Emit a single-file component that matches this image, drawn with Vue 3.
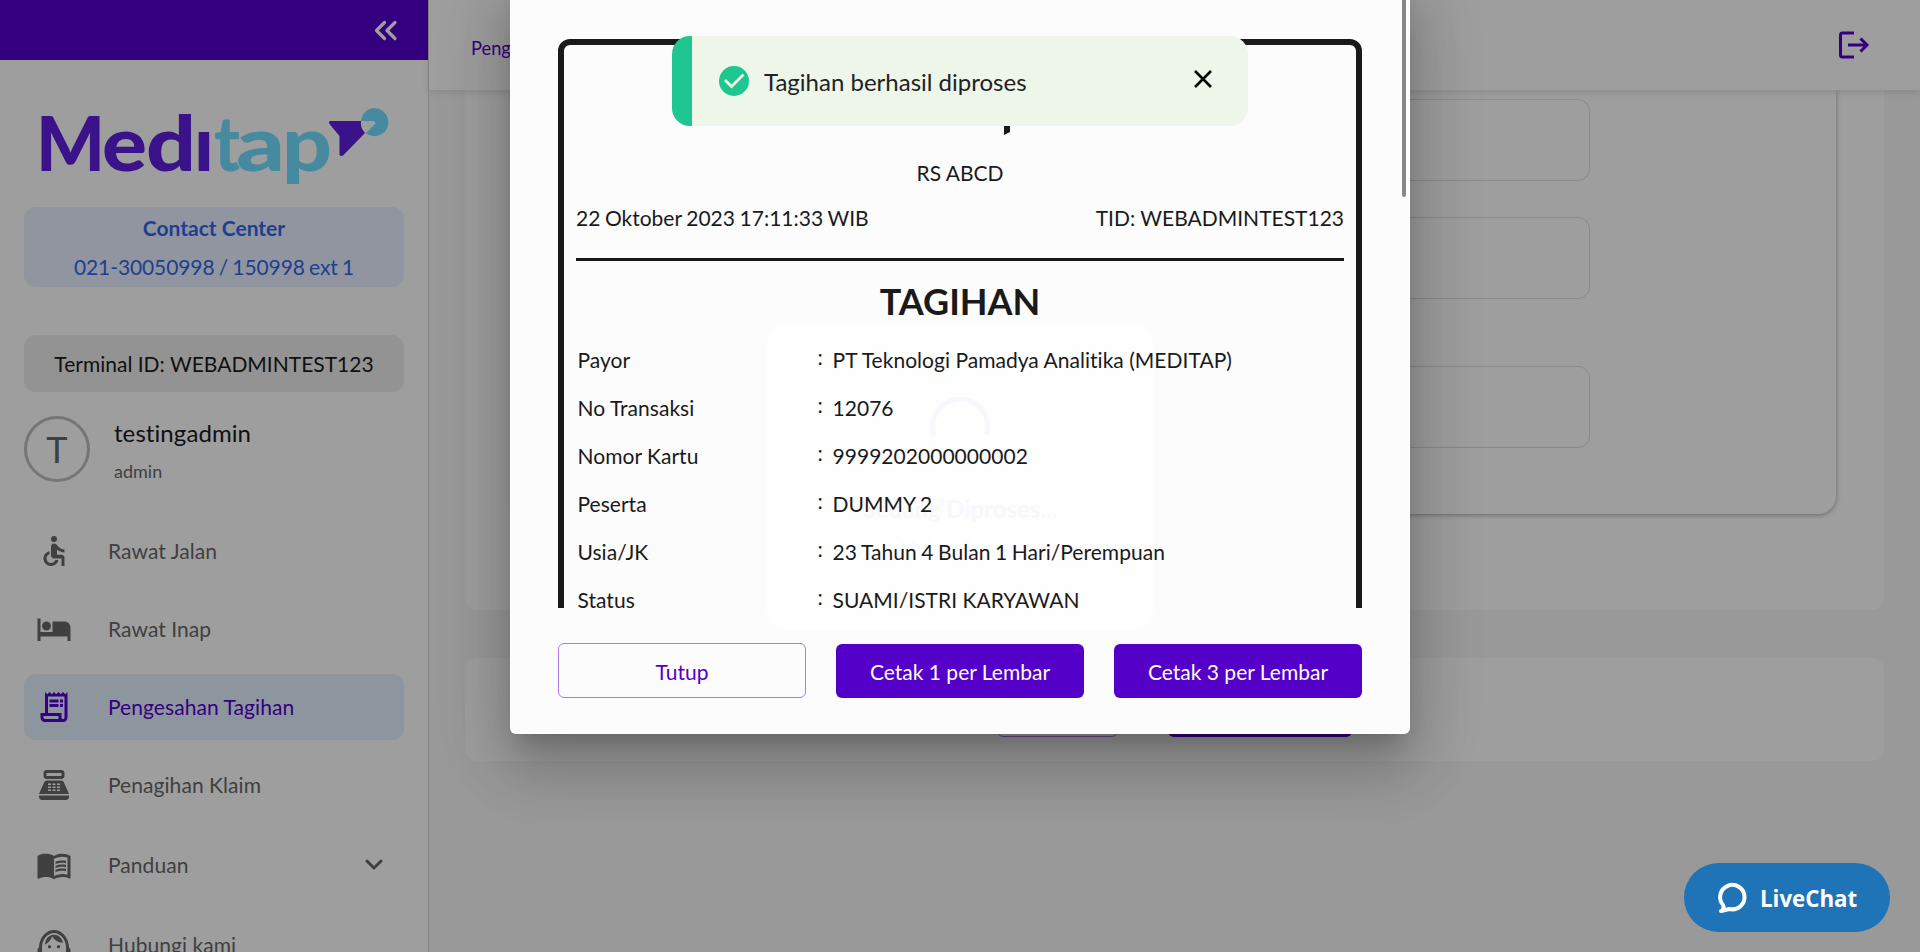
<script setup>
const menu = [
  { label: 'Rawat Jalan', icon: 'M12 2a2 2 0 1 0 0 4 2 2 0 0 0 0-4zM19 13v-2c-1.54.02-3.09-.75-4.07-1.83l-1.29-1.43c-.17-.19-.38-.34-.61-.45H13c-.35-.2-.75-.3-1.19-.26C10.76 7.11 10 8.04 10 9.09V15c0 1.1.9 2 2 2h5v5h2v-5.5c0-1.1-.9-2-2-2h-3v-3.45c1.29 1.07 3.25 1.94 5 1.95zm-6.17 5c-.41 1.16-1.52 2-2.83 2-1.66 0-3-1.34-3-3 0-1.31.84-2.41 2-2.83V12.1c-2.28.46-4 2.48-4 4.9 0 2.76 2.24 5 5 5 2.42 0 4.44-1.72 4.9-4h-2.07z' },
  { label: 'Rawat Inap', icon: 'M7 13c1.66 0 3-1.34 3-3S8.66 7 7 7s-3 1.34-3 3 1.34 3 3 3zm12-6h-8v7H3V5H1v15h2v-3h18v3h2v-9c0-2.21-1.79-4-4-4z' },
  { label: 'Pengesahan Tagihan', active: true, icon: 'M19.5 3.5 18 2l-1.5 1.5L15 2l-1.5 1.5L12 2l-1.5 1.5L9 2 7.5 3.5 6 2v14H3v3c0 1.66 1.34 3 3 3h12c1.66 0 3-1.34 3-3V2l-1.5 1.5zM15 20H6c-.55 0-1-.45-1-1v-1h10v2zm4-1c0 .55-.45 1-1 1s-1-.45-1-1v-3H8V5h11v14zM9 7h6v2H9zM16 7h2v2h-2zM9 10h6v2H9zM16 10h2v2h-2z' },
  { label: 'Penagihan Klaim', icon: 'M17 2H7c-1.1 0-2 .9-2 2v2c0 1.1.9 2 2 2h10c1.1 0 2-.9 2-2V4c0-1.1-.9-2-2-2zm0 4H7V4h10v2zm3 16H4c-1.1 0-2-.9-2-2v-1h20v1c0 1.1-.9 2-2 2zM18.53 10.19C18.21 9.47 17.49 9 16.7 9H7.3c-.79 0-1.51.47-1.83 1.19L2 18h20l-3.47-7.81zM8 11h2v1H8zM11 11h2v1h-2zM14 11h2v1h-2zM8 13h2v1H8zM11 13h2v1h-2zM14 13h2v1h-2zM8 15h2v1H8zM11 15h2v1h-2zM14 15h2v1h-2z' },
  { label: 'Panduan', expandable: true, icon: 'M21 5c-1.11-.35-2.33-.5-3.5-.5-1.95 0-4.05.4-5.5 1.5-1.45-1.1-3.55-1.5-5.5-1.5S2.45 4.9 1 6v14.65c0 .25.25.5.5.5.1 0 .15-.05.25-.05C3.1 20.45 5.05 20 6.5 20c1.95 0 4.05.4 5.5 1.5 1.35-.85 3.8-1.5 5.5-1.5 1.65 0 3.35.3 4.75 1.05.1.05.15.05.25.05.25 0 .5-.25.5-.5V6c-.6-.45-1.25-.75-2-1zm0 13.5c-1.1-.35-2.3-.5-3.5-.5-1.7 0-4.15.65-5.5 1.5V8c1.35-.85 3.8-1.5 5.5-1.5 1.2 0 2.4.15 3.5.5v11.5zM17.5 10.5c.88 0 1.73.09 2.5.26V9.24c-.79-.15-1.64-.24-2.5-.24-1.7 0-3.24.29-4.5.83v1.66c1.13-.64 2.7-.99 4.5-.99zM13 12.49v1.66c1.13-.64 2.7-.99 4.5-.99.88 0 1.73.09 2.5.26V11.9c-.79-.15-1.64-.24-2.5-.24-1.7 0-3.24.3-4.5.83zM17.5 14.33c-1.7 0-3.24.29-4.5.83v1.66c1.13-.64 2.7-.99 4.5-.99.88 0 1.73.09 2.5.26v-1.52c-.79-.16-1.64-.24-2.5-.24z' },
  { label: 'Hubungi kami', icon: 'M22 13.7C22 7.1 17.2 2 12 2S2 7.1 2 13.7c-.6.34-1 .98-1 1.8v2c0 1.1.9 2 2 2h1v-6.1C4 8.5 7.6 4 12 4s8 4.5 8 9.4V19.500h1c1.1 0 2-.9 2-2v-2c0-.82-.4-1.46-1-1.8zM9 12a1.1 1.1 0 1 0 0 2.2A1.1 1.1 0 0 0 9 12zM15 12a1.1 1.1 0 1 0 0 2.2A1.1 1.1 0 0 0 15 12zM6 11.6C7.800 10.9 9.900 9 10.800 6.200 12.200 8.800 14.900 10.500 18 10.500 17.400 7.400 14.900 5.100 12 5.100 8.700 5.100 6.100 8 6 11.600z' },
]
const rows = [
  ['Payor', 'PT Teknologi Pamadya Analitika (MEDITAP)'],
  ['No Transaksi', '12076'],
  ['Nomor Kartu', '9999202000000002'],
  ['Peserta', 'DUMMY 2', true],
  ['Usia/JK', '23 Tahun 4 Bulan 1 Hari/Perempuan', true],
  ['Status', 'SUAMI/ISTRI KARYAWAN'],
]
</script>

<template>
  <div class="app">
    <aside class="sidebar">
      <div class="side-top">
        <svg width="36" height="36" viewBox="0 0 36 36" fill="none" stroke="#9e9e9e" stroke-width="3.2" stroke-linecap="round" stroke-linejoin="round"><path d="M16.500 10.500 8.500 18.500l8 8M27 10.500 19 18.500l8 8" /></svg>
      </div>
      <svg class="logo" width="350" height="82" viewBox="0 0 350 82">
        <g class="word purple">
          <text x="-3" y="64" textLength="69" lengthAdjust="spacingAndGlyphs">M</text>
          <text x="63" y="64" textLength="45" lengthAdjust="spacingAndGlyphs">e</text>
          <text x="107" y="64" textLength="50" lengthAdjust="spacingAndGlyphs">d</text>
          <text x="155" y="64">ı</text>
        </g>
        <g class="word teal">
          <text x="175" y="64" textLength="26" lengthAdjust="spacingAndGlyphs">t</text>
          <text x="197" y="64" textLength="49" lengthAdjust="spacingAndGlyphs">a</text>
          <text x="243" y="64" textLength="50" lengthAdjust="spacingAndGlyphs">p</text>
        </g>
        <path d="M291 14h31q-1 7 4 12l-21.500 22q-2 2-4 0V29l-10-12q-1-3 .5-3z" fill="#3a1289" />
        <path d="M322 14a13.700 14 0 1 1 5 12l9-9q1-3-2-3z" fill="#468a9f" />
      </svg>
      <div class="contact">
        <strong>Contact Center</strong>
        <span>021-30050998 / 150998 ext 1</span>
      </div>
      <div class="terminal">Terminal ID: WEBADMINTEST123</div>
      <div class="user">
        <div class="avatar">T</div>
        <div class="who">
          <div class="name">testingadmin</div>
          <div class="role">admin</div>
        </div>
      </div>
      <nav class="menu">
        <div v-for="m in menu" :key="m.label" class="item" :class="{ active: m.active, tall: m.expandable }">
          <svg width="36" height="36" viewBox="0 0 24 24" fill="currentColor" fill-rule="evenodd"><path :d="m.icon" /></svg>
          <span>{{ m.label }}</span>
          <svg v-if="m.expandable" class="chev" width="20" height="14" viewBox="0 0 20 14" fill="none" stroke="currentColor" stroke-width="3" stroke-linecap="round" stroke-linejoin="round"><path d="m3 3 7 7 7-7" /></svg>
        </div>
      </nav>
    </aside>

    <div class="main">
      <header class="bar">
        <span>Pengesahan Tagihan</span>
        <svg width="36" height="36" viewBox="0 0 36 36" fill="none" stroke="#340080" stroke-width="3"><path d="M20 6H8.500Q6.500 6 6.500 8v20q0 2 2 2H20" /><path d="M14 18h19M26.500 11.500 33 18l-6.500 6.500" /></svg>
      </header>
      <main class="content">
        <section class="card form">
          <div class="panel">
            <div class="field"></div>
            <div class="field"></div>
            <div class="field last"></div>
          </div>
        </section>
        <section class="card actions">
          <div class="ghost-btn"></div>
          <div class="fill-btn"></div>
        </section>
      </main>
    </div>

    <div class="dialog">
      <div class="scroll">
        <div class="receipt">
          <div class="mark"><svg width="10" height="12" viewBox="0 0 10 12"><path d="M1 0h6v6L1 9z" fill="#1a1a1a" /></svg></div>
          <div class="hospital">RS ABCD</div>
          <div class="meta"><span class="tight">22 Oktober 2023 17:11:33 WIB</span><span>TID: WEBADMINTEST123</span></div>
          <h1>TAGIHAN</h1>
          <div v-for="r in rows" :key="r[0]" class="row">
            <span>{{ r[0] }}</span><span class="colon">:</span><span :class="{ tight: r[2] }">{{ r[1] }}</span>
          </div>
        </div>
      </div>
      <div class="buttons">
        <button class="outline">Tutup</button>
        <button>Cetak 1 per Lembar</button>
        <button>Cetak 3 per Lembar</button>
      </div>
      <div class="thumb"></div>
      <div class="loading">
        <svg width="64" height="64" viewBox="0 0 64 64" fill="none" stroke="#f9f7fd" stroke-width="5"><path d="M6.500 42.500A27.500 27.500 0 1 1 58.500 40.500" /></svg>
        <strong>Sedang Diproses...</strong>
        <span>Mohon Tunggu</span>
      </div>
    </div>

    <div class="toast">
      <svg width="30" height="30" viewBox="0 0 30 30"><circle cx="15" cy="15" r="15" fill="#20c690" /><path d="m6 14 6.500 6.500L24.500 8.500" fill="none" stroke="#eef6ea" stroke-width="2.800" /></svg>
      <span>Tagihan berhasil diproses</span>
      <svg class="close" width="18" height="18" viewBox="0 0 18 18" stroke="#000" stroke-width="2.600"><path d="m1 1 16 16M17 1 1 17" /></svg>
    </div>

    <div class="chat">
      <svg width="32" height="34" viewBox="0 0 32 34" fill="none" stroke="#fff" stroke-width="4" stroke-linejoin="round"><path d="M7 24A12.200 12.200 0 1 1 13.500 28L5 30Q9 28 7 24z" /></svg>
      <span>LiveChat</span>
    </div>
  </div>
</template>

<style>
body { margin: 0; overflow: hidden; }
</style>

<style scoped>
* { box-sizing: border-box; }
.app { position: relative; display: flex; width: 1920px; height: 952px; overflow: hidden; background: #999; font-family: Lato, "Liberation Sans", sans-serif; font-size: 21px; line-height: 30px; white-space: nowrap; font-variant-ligatures: none; }
svg { display: block; flex: none; }
.tight { word-spacing: -0.8px; }
.sidebar { width: 429px; height: 952px; overflow: hidden; background: #9e9e9e; border-right: 1px solid #858585; flex: none; color: #404040; }
.side-top { height: 60px; background: #340080; display: flex; justify-content: flex-end; padding: 12px 24px 0 0; }
.logo { margin: 47px 0 0 39px; overflow: visible; }
.word { font-family: Lato, sans-serif; font-weight: 900; font-size: 76px; }
.purple { fill: #3a1289; }
.teal { fill: #468a9f; }
.contact { margin: 18px 24px 0; height: 80px; border-radius: 12px; background: #9195a0; color: #1c3f90; display: flex; flex-direction: column; align-items: center; padding-top: 6px; gap: 9px; }
.contact span { word-spacing: -1px; letter-spacing: -.11px; }
.terminal { margin: 48px 24px 0; height: 57px; border-radius: 12px; background: #939393; color: #101010; display: flex; align-items: center; justify-content: center; }
.user { margin: 24px 24px 0; display: flex; gap: 24px; height: 66px; }
.avatar { width: 66px; height: 66px; border: 3px solid #767676; border-radius: 50%; display: flex; align-items: center; justify-content: center; font-size: 36px; }
.name { font-size: 24px; color: #101010; margin-top: 2px; letter-spacing: .08px; }
.role { font-size: 18px; margin-top: 8px; }
.menu { margin: 36px 24px 0; display: flex; flex-direction: column; gap: 12px; }
.item { height: 66px; border-radius: 12px; display: flex; align-items: center; padding: 0 20px 0 12px; flex: none; }
.item span { margin-left: 36px; letter-spacing: .06px; }
.item.tall { height: 70px; }
.item.active { background: #8d959f; color: #340080; }
.chev { margin-left: auto; }
.main { flex: 1; min-width: 0; display: flex; flex-direction: column; isolation: isolate; }
.bar { height: 90px; flex: none; background: #9e9e9e; box-shadow: 0 2px 7px rgba(0, 0, 0, .12); display: flex; justify-content: space-between; align-items: center; padding: 0 50px 0 42px; z-index: 1; font-size: 18.3px; color: #340080; }
.bar span { padding-top: 6px; }
.content { padding: 0 36px; display: flex; flex-direction: column; gap: 48px; }
.card { background: #9e9e9e; border-radius: 12px; }
.form { height: 520px; border-radius: 0 0 12px 12px; padding: 0 48px; }
.panel { height: 424px; border-radius: 0 0 18px 18px; box-shadow: 0 1px 5px rgba(0, 0, 0, .35); padding: 9px 246px 0 48px; }
.field { height: 82px; border: 1px solid #898989; border-radius: 12px; margin-bottom: 36px; }
.last { margin-top: 67px; }
.actions { height: 103px; padding: 25px 532px 0 0; display: flex; justify-content: flex-end; gap: 50px; }
.ghost-btn { width: 121px; height: 54px; border: 1px solid #68508a; border-radius: 6px; }
.fill-btn { width: 184px; height: 54px; background: #340080; border-radius: 6px; }
.dialog { position: absolute; left: 510px; top: -20px; width: 900px; height: 754px; border-radius: 6px; background: #fcfcfc; color: #1a1a1a; padding: 0 48px; box-shadow: 0 16px 22px -10px rgba(0, 0, 0, .2), 0 36px 57px 4px rgba(0, 0, 0, .14), 0 13px 69px 12px rgba(0, 0, 0, .12); isolation: isolate; }
.scroll { height: 628px; overflow: hidden; padding-top: 59px; position: relative; z-index: 1; }
.receipt { border: 6px solid #1a1a1a; border-radius: 12px; padding: 0 12px; height: 900px; }
.mark { height: 113px; display: flex; align-items: flex-end; padding: 0 0 20px 427px; }
.hospital { text-align: center; }
.meta { display: flex; justify-content: space-between; padding: 15px 0 25px; border-bottom: 3px solid #1a1a1a; }
h1 { margin: 15px 0 10px; font-size: 36px; line-height: 50px; text-align: center; font-weight: 700; }
.row { display: grid; grid-template-columns: 239px 16px 1fr; padding-left: 1.5px; height: 48px; align-items: center; letter-spacing: .03px; }
.colon { position: relative; top: -3px; left: 1px; }
.buttons { display: grid; grid-template-columns: 1fr 1fr 1fr; gap: 30px; margin-top: 35px; align-items: end; }
button { height: 54px; border: 0; border-radius: 6px; background: #5400c8; color: #fcfcfc; font: inherit; padding: 2px 0 0; }
.outline { height: 55px; border: 1px solid #a97de3; background: none; color: #5400c8; }
.thumb { position: absolute; right: 4px; top: 0; width: 4px; height: 217px; background: #888; border-radius: 2px; }
.loading { position: absolute; left: 257px; top: 344px; width: 386px; height: 306px; border-radius: 18px; background: #fefefe; display: flex; flex-direction: column; align-items: center; padding-top: 70px; color: #fbfafd; }
.loading strong { font-size: 24px; margin-top: 36px; color: #f8f7fc; }
.loading span { margin-top: 8px; font-size: 18px; }
.toast { position: absolute; left: 672px; top: 36px; width: 576px; height: 90px; border-radius: 18px; background: linear-gradient(90deg, #20c690 20px, #eef6ea 20px); display: flex; align-items: center; padding: 0 36px 0 47px; font-size: 24px; color: #222; }
.toast span { margin-left: 15px; padding-top: 1px; }
.close { margin: -4px 0 0 auto; }
.chat { position: absolute; left: 1684px; top: 863px; width: 206px; height: 69px; border-radius: 35px; background: #1f73b7; color: #fff; display: flex; align-items: center; padding-left: 32px; font: 700 22.3px/30px "Open Sans", "Noto Sans", sans-serif; }
.chat span { margin-left: 12px; padding-top: 2px; }
</style>
